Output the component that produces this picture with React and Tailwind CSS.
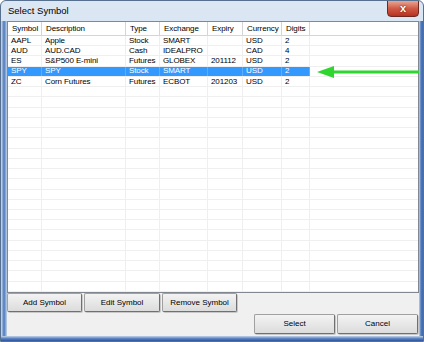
import React from 'react';

// Win7-style "Select Symbol" picker dialog
const columns = [
  { key: 'symbol', label: 'Symbol' },
  { key: 'desc', label: 'Description' },
  { key: 'type', label: 'Type' },
  { key: 'exch', label: 'Exchange' },
  { key: 'expiry', label: 'Expiry' },
  { key: 'ccy', label: 'Currency' },
  { key: 'digits', label: 'Digits' },
];

const symbols = [
  { symbol: 'AAPL', desc: 'Apple', type: 'Stock', exch: 'SMART', expiry: '', ccy: 'USD', digits: '2' },
  { symbol: 'AUD', desc: 'AUD.CAD', type: 'Cash', exch: 'IDEALPRO', expiry: '', ccy: 'CAD', digits: '4' },
  { symbol: 'ES', desc: 'S&P500 E-mini', type: 'Futures', exch: 'GLOBEX', expiry: '201112', ccy: 'USD', digits: '2' },
  { symbol: 'SPY', desc: 'SPY', type: 'Stock', exch: 'SMART', expiry: '', ccy: 'USD', digits: '2' },
  { symbol: 'ZC', desc: 'Corn Futures', type: 'Futures', exch: 'ECBOT', expiry: '201203', ccy: 'USD', digits: '2' },
];

const selected = 'SPY';
const totalRows = 25;
const gridCols = 'grid grid-cols-[34px_84px_34px_48px_35px_39px_28px_1fr]';

const WinButton = ({ children, className = '' }) => (
  <button
    className={
      'flex items-center justify-center rounded-[2px] border border-[#a0a0a0] border-b-[#707070] border-r-[#707070] bg-gradient-to-b from-[#f3f3f3] to-[#dcdcdc] text-[8px] text-black shadow-[1px_1px_0_#c8c8c8] ' +
      className
    }
  >
    {children}
  </button>
);

const App = () => {
  const rows = Array.from({ length: totalRows }, (_, i) => symbols[i] || null);

  return (
    <div className="w-[424px] h-[342px] flex flex-col bg-gradient-to-b from-[#dce7f4] to-[#c2d4ea] border border-[#57708f] rounded-t-[6px] font-['Liberation_Sans',Arial,sans-serif] overflow-hidden">
      {/* title bar */}
      <div className="h-[20px] flex items-start justify-between pl-[7px] pr-[4px]">
        <span className="mt-[5px] text-[9.5px] leading-[10px] text-black">Select Symbol</span>
        <div className="w-[32px] h-[17px] -mt-px flex items-center justify-center rounded-b-[4px] border border-[#6e2a22] bg-gradient-to-b from-[#e9a595] via-[#cf5a45] to-[#b8301f] text-white text-[11px] font-bold leading-none [text-shadow:0_0_2px_#4a0f08]">
          x
        </div>
      </div>

      <div className="flex-1 flex min-h-0">
        <div className="w-[6px] bg-gradient-to-r from-[#d3deeb] via-[#4d79bf] to-[#c6d3e4]" />

        {/* client area */}
        <div className="flex-1 flex flex-col bg-[#f0f0f0]">
          <div className="relative h-[272px] flex flex-col bg-white border border-[#828790]">
            {/* header */}
            <div className={gridCols + ' h-[14px] border-b border-[#d5d5d5] text-[8px] text-black'}>
              {columns.map((c) => (
                <div key={c.key} className="border-r border-[#d5d5d5] pl-[4px] leading-[13px] tracking-[-0.1px] truncate">
                  {c.label}
                </div>
              ))}
              <div />
            </div>

            {/* body */}
            <div className="flex-1 min-h-0 flex flex-col">
              {rows.map((r, i) => {
                const isSel = r && r.symbol === selected;
                return (
                  <div key={i} className={gridCols + ' flex-1 min-h-0 border-b border-[#efefef] text-[8px] leading-none'}>
                    {columns.map((c) => (
                      <div
                        key={c.key}
                        className={
                          'border-r pl-[3px] flex items-center min-h-0 overflow-hidden whitespace-nowrap tracking-[-0.1px] ' +
                          (isSel ? 'bg-[#3399ff] text-white border-[#5aadff]' : 'text-black border-[#efefef]')
                        }
                      >
                        {r ? r[c.key] : ''}
                      </div>
                    ))}
                    <div />
                  </div>
                );
              })}
            </div>

            {/* annotation arrow */}
            <svg className="absolute left-[309px] top-[43px]" width="102" height="14" viewBox="0 0 102 14">
              <path d="M16 7 H102" stroke="#2fd62f" strokeWidth="3" />
              <path d="M0 7 L17 1 L17 13 Z" fill="#2fd62f" />
            </svg>
          </div>

          {/* buttons */}
          <div className="flex gap-[2px] h-[19px]">
            <WinButton className="w-[75px]">Add Symbol</WinButton>
            <WinButton className="w-[76px]">Edit Symbol</WinButton>
            <WinButton className="w-[75px]">Remove Symbol</WinButton>
          </div>
          <div className="flex justify-end gap-[2px] h-[20px] mt-[2px] pr-px">
            <WinButton className="w-[81px]">Select</WinButton>
            <WinButton className="w-[81px]">Cancel</WinButton>
          </div>
        </div>

        <div className="w-[4px] bg-gradient-to-r from-[#c6d3e4] via-[#4d79bf] to-[#3f6aad]" />
      </div>

      <div className="h-[5px] bg-gradient-to-b from-[#c6d3e4] via-[#5a84c6] to-[#2f5597]" />
    </div>
  );
};

export default App;
